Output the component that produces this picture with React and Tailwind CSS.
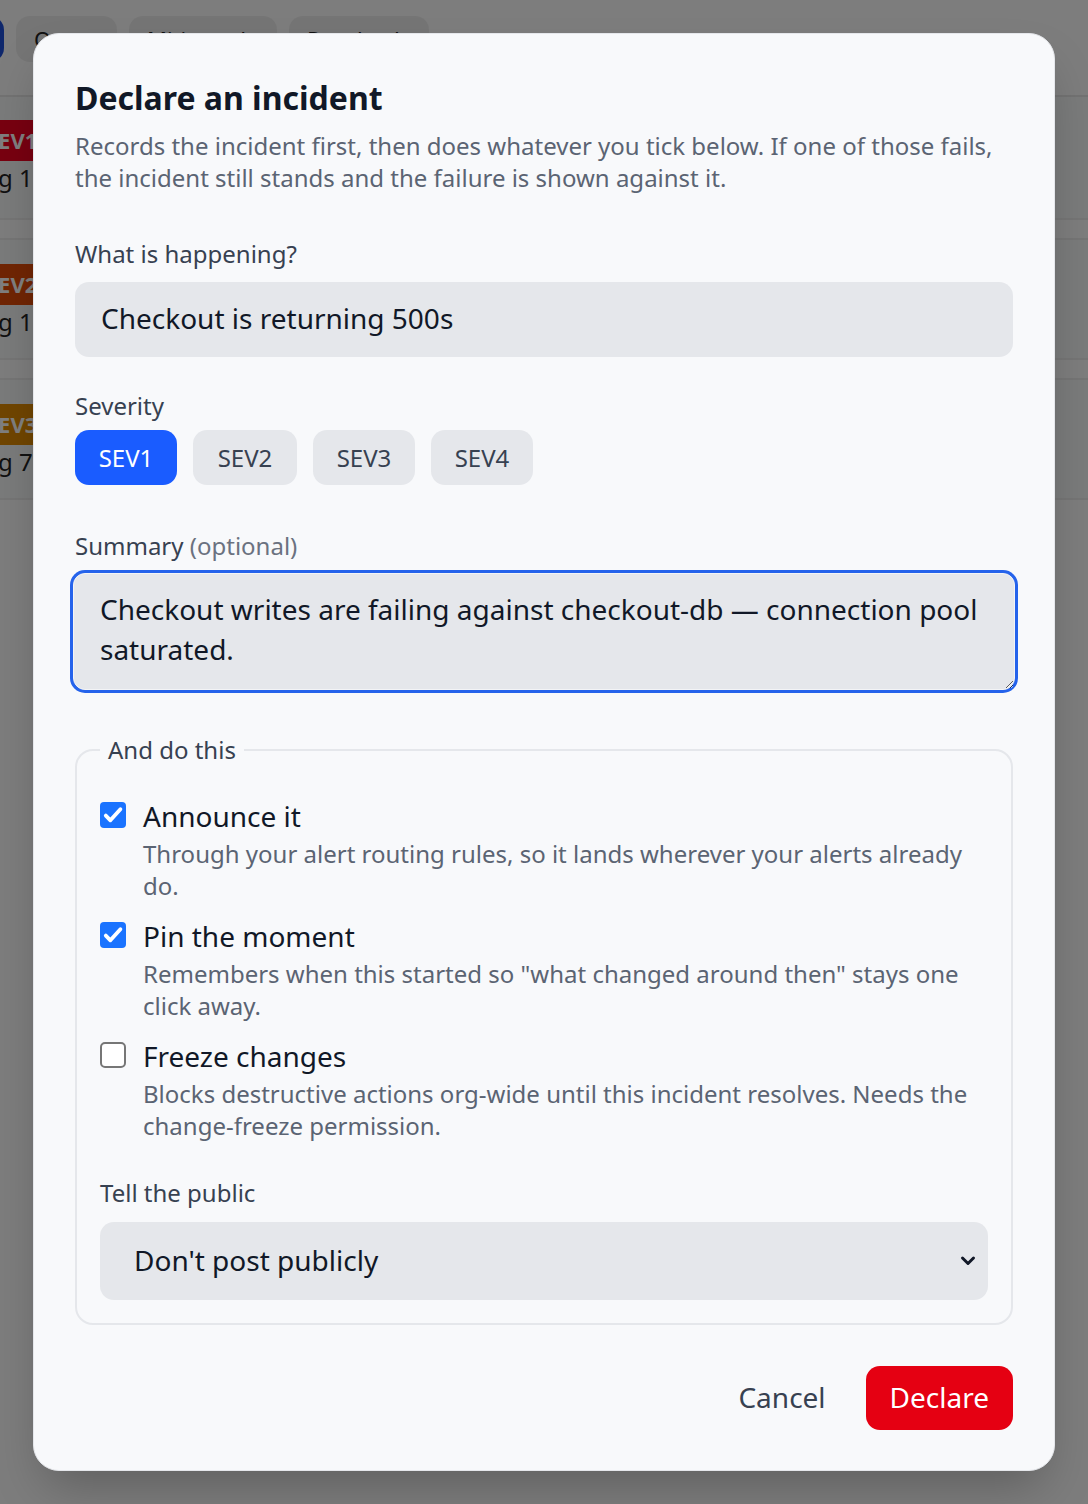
import React from "react";

function Check({ checked }) {
  if (checked) {
    return (
      <span className="mt-[4px] flex h-[26px] w-[26px] shrink-0 rounded-[4px] bg-[#1a73ff]">
        <svg width="26" height="26" viewBox="0 0 26 26" fill="none">
          <path d="M5.8 13.6l4.6 4.7L20.4 7.2" stroke="white" strokeWidth="3.8" strokeLinecap="round" strokeLinejoin="round" />
        </svg>
      </span>
    );
  }
  return <span className="mt-[4px] h-[26px] w-[26px] shrink-0 rounded-[5px] border-2 border-[#767676] bg-white" />;
}

function Option({ checked, title, desc }) {
  return (
    <div className="flex gap-[17px]">
      <Check checked={checked} />
      <div className="flex flex-col gap-[4px]">
        <div className="text-[28px] leading-[36px] text-[#111827]">{title}</div>
        <div className="text-[24px] leading-[32px] text-[#5b6473]">{desc}</div>
      </div>
    </div>
  );
}

export default function App() {
  const font = { fontFamily: '"Noto Sans", "Open Sans", sans-serif' };
  return (
    <div className="relative min-h-[1504px] w-[1088px] overflow-hidden bg-[#fafafa]" style={font}>
      {/* background page */}
      <div className="flex flex-col">
        <div className="flex h-[97px] items-start gap-[12px] border-b-2 border-[#e5e5e5] pl-[17px] pt-[16px]">
          <div className="-ml-[120px] h-[46px] w-[107px] rounded-[14px] bg-[#1d4ed8]" />
          <div className="flex h-[46px] w-[101px] items-center rounded-[14px] bg-[#ebebeb] px-[18px] text-[22px] text-[#222]">Open</div>
          <div className="flex h-[46px] w-[148px] items-center rounded-[14px] bg-[#ebebeb] px-[18px] text-[22px] text-[#222]">Mitigated</div>
          <div className="flex h-[46px] w-[140px] items-center rounded-[14px] bg-[#ebebeb] px-[18px] text-[22px] text-[#222]">Resolved</div>
        </div>
        <div className="flex flex-col gap-[18px]">
          {[
            { sev: "SEV1", color: "bg-[#f00020]", t: "g 12m ago", top: "border-t-0 h-[123px] pt-[23px]" },
            { sev: "SEV2", color: "bg-[#e04a08]", t: "g 1h ago", top: "border-t-2 h-[122px] pt-[24px]" },
            { sev: "SEV3", color: "bg-[#e08a00]", t: "g 7h ago", top: "border-t-2 h-[122px] pt-[24px]" },
          ].map((r, i) => (
            <div key={i} className={`flex flex-col gap-[2px] border-b-2 border-[#ebebeb] bg-[#f5f6f6] ${r.top}`}>
              <div className={`-ml-[16px] w-fit px-[2px] text-[22px] font-bold leading-[41px] text-white ${r.color}`}>{r.sev}</div>
              <div className="-ml-[2px] text-[24px] leading-[30px] text-[#222]">{r.t}</div>
            </div>
          ))}
        </div>
      </div>

      {/* overlay */}
      <div className="absolute inset-0 bg-black/50 p-[33px]">
        <div className="flex w-[1022px] flex-col rounded-[26px] border border-[#e5e7eb] bg-[#f8f9fb] px-[41px] pb-[40px] pt-[42px] shadow-2xl">
          <h2 className="text-[32px] font-bold leading-[44px] text-[#111827]">Declare an incident</h2>
          <p className="mt-[10px] text-[24px] leading-[32px] text-[#5b6473]">
            Records the incident first, then does whatever you tick below. If one of those fails, the incident still stands and the failure is shown against it.
          </p>

          <label className="mt-[44px] text-[24px] leading-[32px] text-[#374151]">What is happening?</label>
          <input
            readOnly
            value="Checkout is returning 500s"
            className="mt-[12px] h-[75px] w-full rounded-[14px] bg-[#e5e7eb] px-[26px] pb-[3px] text-[28px] text-[#111827] outline-none"
            style={font}
          />

          <div className="mt-[33px] text-[24px] leading-[32px] text-[#374151]">Severity</div>
          <div className="mt-[8px] flex gap-[16px]">
            <button className="h-[55px] w-[102px] rounded-[14px] bg-[#1a5cff] text-[24px] text-white">SEV1</button>
            <button className="h-[55px] w-[104px] rounded-[14px] bg-[#e5e7eb] text-[24px] text-[#374151]">SEV2</button>
            <button className="h-[55px] w-[102px] rounded-[14px] bg-[#e5e7eb] text-[24px] text-[#374151]">SEV3</button>
            <button className="h-[55px] w-[102px] rounded-[14px] bg-[#e5e7eb] text-[24px] text-[#374151]">SEV4</button>
          </div>

          <div className="mt-[45px] text-[24px] leading-[32px] text-[#374151]">
            Summary <span className="text-[#6b7280]">(optional)</span>
          </div>
          <textarea
            readOnly
            defaultValue="Checkout writes are failing against checkout-db — connection pool saturated."
            className="-mx-[2px] mt-[11px] h-[117px] w-[942px] rounded-[12px] border border-[#f3f4f6] bg-[#e5e7eb] px-[26px] py-[15px] text-[28px] leading-[40px] text-[#111827] shadow-[0_0_0_3px_#2563eb] outline-none"
            style={font}
          />

          <fieldset className="mt-[44px] rounded-[18px] border-2 border-[#e5e7eb] px-[23px] pb-[23px] pt-[32px]">
            <legend className="px-[8px] text-[24px] leading-[32px] text-[#374151]">And do this</legend>
            <div className="flex flex-col gap-[16px]">
              <Option checked title="Announce it" desc="Through your alert routing rules, so it lands wherever your alerts already do." />
              <Option checked title="Pin the moment" desc={'Remembers when this started so "what changed around then" stays one click away.'} />
              <Option title="Freeze changes" desc="Blocks destructive actions org-wide until this incident resolves. Needs the change-freeze permission." />
            </div>
            <div className="mt-[35px] text-[24px] leading-[32px] text-[#374151]">Tell the public</div>
            <div className="relative mt-[13px]">
              <select
                className="h-[78px] w-full appearance-none rounded-[14px] bg-[#e5e7eb] px-[34px] pb-[3px] text-[28px] text-[#111827] outline-none"
                style={font}
                defaultValue="none"
              >
                <option value="none">Don't post publicly</option>
              </select>
              <svg className="pointer-events-none absolute right-[12px] top-[31px]" width="16" height="16" viewBox="0 0 16 16" fill="none">
                <path d="M2.5 5l5.5 5.5L13.5 5" stroke="#111827" strokeWidth="3" strokeLinecap="round" strokeLinejoin="round" />
              </svg>
            </div>
          </fieldset>

          <div className="mt-[41px] flex justify-end gap-[16px]">
            <button className="h-[64px] px-[24px] pb-[3px] text-[28px] text-[#374151]">Cancel</button>
            <button className="h-[64px] rounded-[14px] bg-[#e50012] px-[24px] pb-[3px] text-[28px] text-white">Declare</button>
          </div>
        </div>
      </div>
    </div>
  );
}
